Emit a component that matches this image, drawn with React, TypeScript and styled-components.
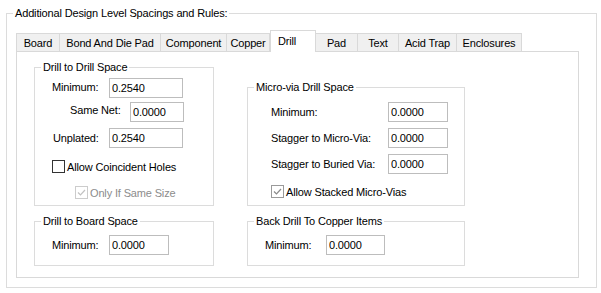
import styled, { createGlobalStyle } from "styled-components";

const GlobalStyle = createGlobalStyle`
  html, body {
    margin: 0;
    padding: 0;
    background: #ffffff;
  }
  body {
    font-family: "Liberation Sans", Arial, sans-serif;
    font-size: 11px;
    letter-spacing: -0.15px;
    color: #000000;
  }
`;

interface TabInfo {
  name: string;
  width: number;
  overlap: boolean;
}

const tabs: TabInfo[] = [
  { name: "Board", width: 44, overlap: false },
  { name: "Bond And Die Pad", width: 102, overlap: true },
  { name: "Component", width: 67, overlap: true },
  { name: "Copper", width: 44, overlap: true },
  { name: "Drill", width: 46, overlap: false },
  { name: "Pad", width: 43, overlap: true },
  { name: "Text", width: 42, overlap: true },
  { name: "Acid Trap", width: 59, overlap: true },
  { name: "Enclosures", width: 66, overlap: true },
];

interface FieldProps {
  label: string;
  value: string;
  indent: number;
  labelWidth: number;
  inputWidth: number;
  top: number;
  lift?: number;
}

const Field = (props: FieldProps) => {
  const { label, value, indent, labelWidth, inputWidth, top, lift = 0 } = props;
  return (
    <FieldRow $indent={indent} $top={top}>
      <FieldLabel $width={labelWidth} $lift={lift}>
        {label}
      </FieldLabel>
      <ValueInput $width={inputWidth} defaultValue={value} />
    </FieldRow>
  );
};

interface CheckProps {
  label: string;
  checked: boolean;
  disabled?: boolean;
  indent: number;
  top: number;
}

const Check = (props: CheckProps) => {
  const { label, checked, disabled = false, indent, top } = props;
  return (
    <CheckRow $indent={indent} $top={top} $disabled={disabled}>
      <CheckBox $checked={checked} $disabled={disabled}>
        {checked && (
          <svg width="11" height="11" viewBox="0 0 11 11">
            <polyline
              points="2,5.5 4.5,8 9,3"
              fill="none"
              stroke={disabled ? "#c2c2c2" : "#8a8a8a"}
              strokeWidth="1.2"
            />
          </svg>
        )}
      </CheckBox>
      <span>{label}</span>
    </CheckRow>
  );
};

const App = () => {
  return (
    <>
      <GlobalStyle />
      <Page>
        <Frame $width={591} $height={282}>
          <Legend>Additional Design Level Spacings and Rules:</Legend>
          <OuterBody>
            <TabRow>
              {tabs.map((t) => (
                <Tab
                  key={t.name}
                  $width={t.width}
                  $overlap={t.overlap}
                  $active={t.name === "Drill"}
                >
                  {t.name}
                </Tab>
              ))}
            </TabRow>
            <Panel>
              <Frame $width={180} $height={146}>
                <Legend>Drill to Drill Space</Legend>
                <GroupBody>
                  <Field label="Minimum:" value="0.2540" indent={17} labelWidth={57} inputWidth={74} top={4} lift={3} />
                  <Field label="Same Net:" value="0.0000" indent={35} labelWidth={60} inputWidth={54} top={4} lift={5} />
                  <Field label="Unplated:" value="0.2540" indent={18} labelWidth={56} inputWidth={74} top={6} />
                  <Check label="Allow Coincident Holes" checked={false} indent={17} top={12} />
                  <Check label="Only If Same Size" checked disabled indent={40} top={13} />
                </GroupBody>
              </Frame>
              <Frame $width={218} $height={126}>
                <Legend>Micro-via Drill Space</Legend>
                <GroupBody>
                  <Field label="Minimum:" value="0.0000" indent={23} labelWidth={117} inputWidth={60} top={8} />
                  <Field label="Stagger to Micro-Via:" value="0.0000" indent={23} labelWidth={117} inputWidth={60} top={6} />
                  <Field label="Stagger to Buried Via:" value="0.0000" indent={23} labelWidth={117} inputWidth={60} top={6} />
                  <Check label="Allow Stacked Micro-Vias" checked indent={23} top={11} />
                </GroupBody>
              </Frame>
              <Frame $width={180} $height={52}>
                <Legend>Drill to Board Space</Legend>
                <GroupBody>
                  <Field label="Minimum:" value="0.0000" indent={17} labelWidth={57} inputWidth={60} top={7} />
                </GroupBody>
              </Frame>
              <Frame $width={218} $height={52}>
                <Legend>Back Drill To Copper Items</Legend>
                <GroupBody>
                  <Field label="Minimum:" value="0.0000" indent={17} labelWidth={61} inputWidth={59} top={7} />
                </GroupBody>
              </Frame>
            </Panel>
          </OuterBody>
        </Frame>
      </Page>
    </>
  );
};

export default App;

const Page = styled.div`
  padding: 6px 0 0 6px;
`;

const Frame = styled.fieldset<{ $width: number; $height: number }>`
  box-sizing: border-box;
  width: ${(p) => p.$width}px;
  height: ${(p) => p.$height}px;
  margin: 0;
  padding: 0;
  min-width: 0;
  border: 1px solid #dcdcdc;
  align-self: end;
`;

const Legend = styled.legend`
  margin-left: 6px;
  padding: 0 2px;
  line-height: 14px;
  font-size: 11px;
  white-space: nowrap;
`;

const OuterBody = styled.div`
  padding: 10px 0 0 9px;
`;

const TabRow = styled.div`
  display: flex;
  align-items: flex-end;
  height: 21px;
`;

const Tab = styled.div<{ $width: number; $overlap: boolean; $active: boolean }>`
  position: relative;
  z-index: ${(p) => (p.$active ? 1 : 0)};
  box-sizing: border-box;
  width: ${(p) => p.$width}px;
  height: ${(p) => (p.$active ? 22 : 18)}px;
  margin-left: ${(p) => (p.$overlap ? -1 : 0)}px;
  margin-bottom: ${(p) => (p.$active ? -1 : 0)}px;
  padding: ${(p) => (p.$active ? "0 12px 2px 0" : "0")};
  display: flex;
  align-items: center;
  justify-content: center;
  border: 1px solid #d9d9d9;
  border-bottom: ${(p) => (p.$active ? "none" : "0")};
  background: ${(p) => (p.$active ? "#ffffff" : "#f0f0f0")};
  white-space: nowrap;
`;

const Panel = styled.div`
  box-sizing: border-box;
  width: 563px;
  height: 227px;
  border: 1px solid #d9d9d9;
  background: #ffffff;
  padding: 8px 0 0 17px;
  display: grid;
  grid-template-columns: 180px 218px;
  grid-template-rows: 146px 52px;
  column-gap: 33px;
  row-gap: 8px;
`;

const GroupBody = styled.div`
  display: flex;
  flex-direction: column;
`;

const FieldRow = styled.div<{ $indent: number; $top: number }>`
  display: flex;
  align-items: center;
  height: 20px;
  margin-top: ${(p) => p.$top}px;
  padding-left: ${(p) => p.$indent}px;
`;

const FieldLabel = styled.span<{ $width: number; $lift: number }>`
  width: ${(p) => p.$width}px;
  padding-bottom: ${(p) => p.$lift}px;
  white-space: nowrap;
`;

const ValueInput = styled.input<{ $width: number }>`
  box-sizing: border-box;
  width: ${(p) => p.$width}px;
  height: 20px;
  margin: 0;
  padding: 0 0 0 2px;
  border: 1px solid #bdbdbd;
  background: #ffffff;
  font: inherit;
  letter-spacing: inherit;
  color: #000000;
  outline: none;
`;

const CheckRow = styled.label<{ $indent: number; $top: number; $disabled: boolean }>`
  display: flex;
  align-items: center;
  gap: 2px;
  height: 13px;
  margin-top: ${(p) => p.$top}px;
  padding-left: ${(p) => p.$indent}px;
  color: ${(p) => (p.$disabled ? "#8c8c8c" : "#000000")};
  white-space: nowrap;
`;

const CheckBox = styled.span<{ $checked: boolean; $disabled: boolean }>`
  box-sizing: border-box;
  width: 13px;
  height: 13px;
  flex: none;
  display: flex;
  align-items: center;
  justify-content: center;
  background: #ffffff;
  border: 1px solid
    ${(p) => (p.$disabled ? "#cccccc" : p.$checked ? "#9a9a9a" : "#333333")};
`;
